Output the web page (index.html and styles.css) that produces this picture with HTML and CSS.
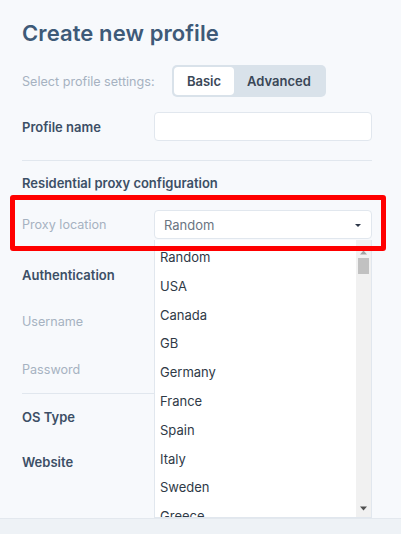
FILE: index.html
```html
<!DOCTYPE html>
<html lang="en">
<head>
<meta charset="utf-8">
<title>Create new profile</title>
<link rel="stylesheet" href="styles.css">
</head>
<body>
<div class="page">
  <h1 class="title">Create new profile</h1>

  <div class="row row-settings">
    <div class="label label-wide muted">Select profile settings:</div>
    <div class="segmented">
      <span class="seg active">Basic</span>
      <span class="seg">Advanced</span>
    </div>
  </div>

  <div class="row row-name">
    <div class="label strong">Profile name</div>
    <div class="input"></div>
  </div>

  <hr class="divider">

  <div class="section-title">Residential proxy configuration</div>

  <div class="row row-location">
    <div class="label muted">Proxy location</div>
    <div class="select">
      <span>Random</span>
      <svg class="caret" width="8" height="5" viewBox="0 0 8 5"><path d="M1 1h6L4 4z" fill="#2d3748"/></svg>
    </div>
  </div>

  <div class="row row-auth">
    <div class="label strong">Authentication</div>
  </div>
  <div class="row row-user">
    <div class="label muted">Username</div>
  </div>
  <div class="row row-pass">
    <div class="label muted">Password</div>
  </div>

  <hr class="divider divider-2">

  <div class="row row-os">
    <div class="label strong">OS Type</div>
  </div>
  <div class="row row-web">
    <div class="label strong">Website</div>
  </div>
</div>

<div class="highlight"></div>

<div class="dropdown">
  <ul class="options">
    <li>Random</li>
    <li>USA</li>
    <li>Canada</li>
    <li>GB</li>
    <li>Germany</li>
    <li>France</li>
    <li>Spain</li>
    <li>Italy</li>
    <li>Sweden</li>
    <li>Greece</li>
  </ul>
  <div class="scrollbar">
    <svg class="arrow up" width="7" height="5" viewBox="0 0 7 5"><path d="M0 4.5h7L3.5 0.5z" fill="#a3a3a3"/></svg>
    <div class="thumb"></div>
    <svg class="arrow down" width="7" height="5" viewBox="0 0 7 5"><path d="M0 0.5h7L3.5 4.5z" fill="#505050"/></svg>
  </div>
</div>

<div class="footer"></div>
</body>
</html>
```

FILE: styles.css
```css
* { box-sizing: border-box; }
html, body { margin: 0; padding: 0; }
body {
  width: 401px;
  height: 534px;
  overflow: hidden;
  background: #f7f9fc;
  font-family: Inter, "Noto Sans", sans-serif;
  color: #3c4f66;
  position: relative;
}
.page {
  padding: 0 29px 0 22px;
  display: flex;
  flex-direction: column;
}
.title {
  margin: 18px 0 0;
  font-size: 22px;
  line-height: 30px;
  font-weight: 600;
  color: #3e5a78;
  letter-spacing: 0.1px;
}
.row {
  display: flex;
  align-items: center;
}
.label {
  width: 132px;
  flex: none;
  font-size: 13px;
  white-space: nowrap;
}
.label-wide { width: 150px; }
.muted { color: #a6b2c1; font-weight: 400; font-size: 12.6px; }
.strong { color: #3c4f66; font-weight: 600; }

.row-settings { margin-top: 17px; height: 32px; }
.segmented {
  display: flex;
  background: #d9e2ea;
  border-radius: 5px;
  padding: 2px;
  height: 32px;
  width: 154px;
}
.seg {
  display: flex;
  align-items: center;
  justify-content: center;
  font-size: 13px;
  font-weight: 600;
  color: #3a4757;
}
.seg.active {
  background: #fff;
  border-radius: 4px;
  width: 60px;
}
.seg:not(.active) { flex: 1; }

.row-name { margin-top: 15px; height: 29px; }
.input {
  flex: 1;
  height: 29px;
  background: #fff;
  border: 1px solid #e1e7ee;
  border-radius: 4px;
}
.divider {
  margin: 19px 0 0;
  border: 0;
  border-top: 1px solid #e1e7ee;
  height: 0;
}
.section-title {
  margin-top: 13px;
  font-size: 13px;
  line-height: 18px;
  font-weight: 600;
  color: #3c4f66;
}
.row-location { margin-top: 18px; height: 29px; }
.select {
  flex: 1;
  height: 29px;
  background: #fff;
  border: 1px solid #e1e7ee;
  border-radius: 4px;
  display: flex;
  align-items: center;
  justify-content: space-between;
  padding: 0 9px 0 9px;
  font-size: 13px;
  color: #6b7582;
}
.caret { margin-top: 1px; }
.row-auth { margin-top: 23px; height: 26px; }
.row-user { margin-top: 20px; height: 26px; }
.row-pass { margin-top: 22px; height: 26px; }
.divider-2 { margin-top: 11px; width: 140px; }
.row-os { margin-top: 10px; height: 26px; }
.row-web { margin-top: 19px; height: 26px; }

.highlight {
  position: absolute;
  left: 10px;
  top: 195px;
  width: 376px;
  height: 56px;
  border: 5px solid #ff0000;
  border-radius: 3px;
  z-index: 3;
}
.dropdown {
  position: absolute;
  left: 154px;
  top: 240px;
  width: 218px;
  height: 278px;
  background: #fff;
  border: 1px solid #e1e7ee;
  border-top: 0;
  overflow: hidden;
  z-index: 2;
}
.options {
  list-style: none;
  margin: 0;
  padding: 3px 0 0;
}
.options li {
  height: 28.8px;
  line-height: 28.8px;
  padding-left: 5px;
  font-size: 13px;
  color: #2f3a47;
}
.scrollbar {
  position: absolute;
  right: 0;
  top: 0;
  bottom: 0;
  width: 15px;
  background: #f1f1f1;
}
.arrow { position: absolute; left: 4px; }
.arrow.up { top: 10px; }
.arrow.down { bottom: 6px; }
.thumb {
  position: absolute;
  left: 2px;
  top: 18px;
  width: 11px;
  height: 16px;
  background: #c1c1c1;
}
.footer {
  position: absolute;
  left: 0;
  right: 0;
  bottom: 0;
  height: 16px;
  background: #eef2f6;
  border-top: 1px solid #e3e8ee;
  z-index: 4;
}
```
